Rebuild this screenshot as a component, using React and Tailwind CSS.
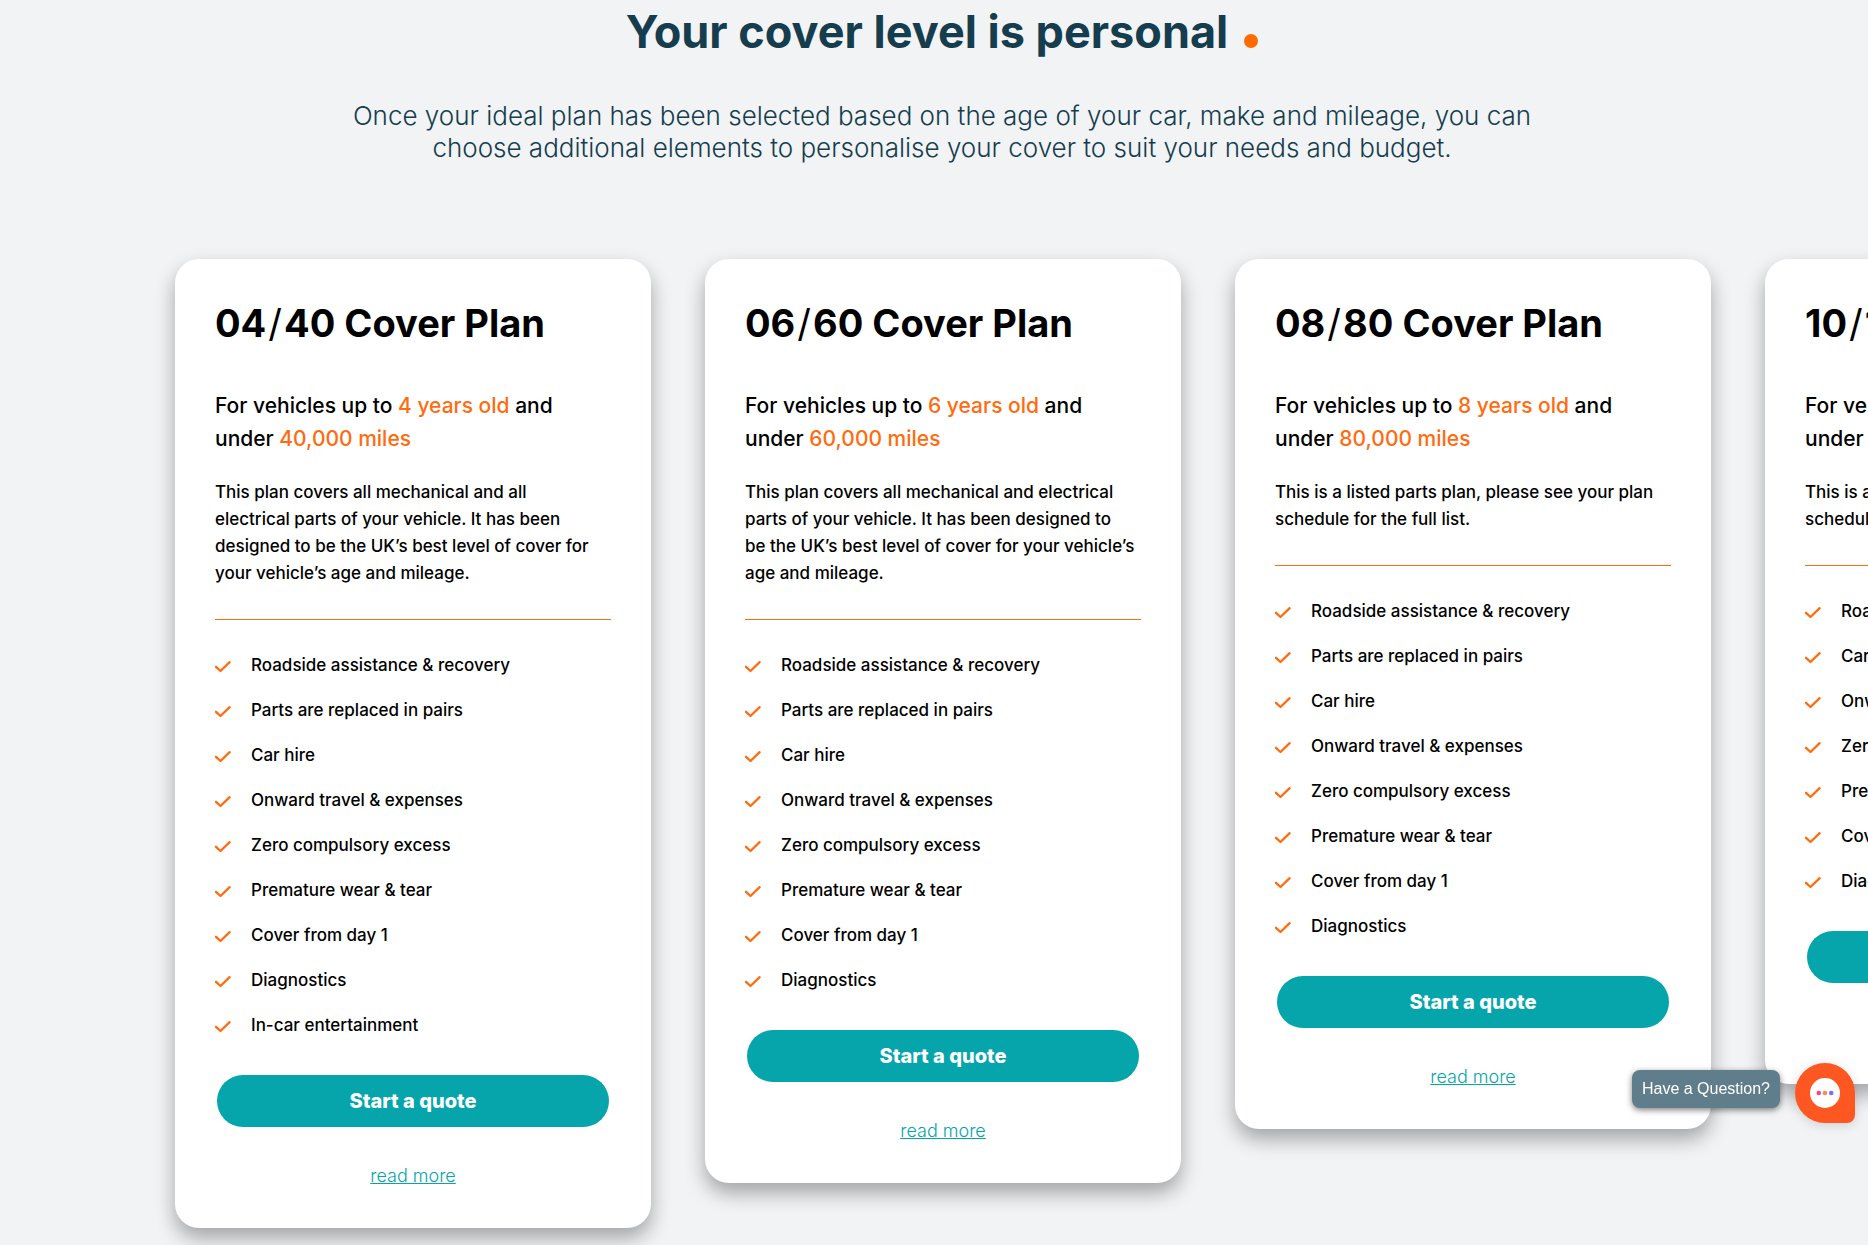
// src/App.jsx
const commonFeatures = [
  'Car hire',
  'Onward travel & expenses',
  'Zero compulsory excess',
  'Premature wear & tear',
  'Cover from day 1',
  'Diagnostics'
];

const listedParts = 'This is a listed parts plan, please see your plan schedule for the full list.';

const plans = [
  {
    age: '04',
    mileage: '40',
    years: '4 years old',
    miles: '40,000 miles',
    description:
      'This plan covers all mechanical and all electrical\u00a0parts of your vehicle. It has been designed to be the UK’s best level of cover for your vehicle’s age and mileage.',
    features: [
      'Roadside assistance & recovery',
      'Parts are replaced in pairs',
      ...commonFeatures,
      'In-car entertainment'
    ]
  },
  {
    age: '06',
    mileage: '60',
    years: '6 years old',
    miles: '60,000 miles',
    description:
      'This plan covers all mechanical and electrical parts of your vehicle. It has been designed to be\u00a0the UK’s best level of cover for your vehicle’s age and mileage.',
    features: ['Roadside assistance & recovery', 'Parts are replaced in pairs', ...commonFeatures]
  },
  {
    age: '08',
    mileage: '80',
    years: '8 years old',
    miles: '80,000 miles',
    description: listedParts,
    features: ['Roadside assistance & recovery', 'Parts are replaced in pairs', ...commonFeatures]
  },
  {
    age: '10',
    mileage: '100',
    years: '10 years old',
    miles: '100,000 miles',
    description: listedParts,
    features: ['Roadside assistance & recovery', ...commonFeatures]
  }
];

function Tick() {
  return (
    <svg className="mt-[2px] h-3 w-4 shrink-0" viewBox="0 0 16 12" fill="none" aria-hidden="true">
      <path
        d="M1 5.8L5.5 10L14.6 1.2"
        stroke="#ff6b0f"
        strokeWidth="2.3"
        strokeLinecap="round"
        strokeLinejoin="round"
      />
    </svg>
  );
}

function PlanCard({ plan }) {
  return (
    <article className="w-[476px] shrink-0 rounded-[24px] bg-white p-10 text-black shadow-[0_10px_20px_rgba(0,0,0,0.33)]">
      <h2 className="text-[38px] leading-12 font-bold whitespace-nowrap">
        {plan.age}
        <span className="mx-[2px] font-normal">/</span>
        {plan.mileage} Cover Plan
      </h2>

      <p className="mt-[42px] text-[21px] leading-[33px] font-medium">
        For vehicles up to <span className="text-[#ff6b0f]">{plan.years}</span> and under{' '}
        <span className="text-[#ff6b0f]">{plan.miles}</span>
      </p>

      <p className="mt-6 text-[17px] leading-[27px] font-medium">{plan.description}</p>

      <hr className="mt-8 border-[#ff6b0f]" />

      <ul className="mt-8 flex flex-col gap-[18px]">
        {plan.features.map((feature) => (
          <li key={feature} className="flex items-center gap-5 text-[17px] leading-[27px] font-medium">
            <Tick />
            {feature}
          </li>
        ))}
      </ul>

      <div className="mt-9 px-[2px]">
        <button
          type="button"
          className="h-[52px] w-full rounded-full bg-[#05a5ab] text-xl font-extrabold text-white"
        >
          Start a quote
        </button>
      </div>

      <div className="mt-[37px] text-center">
        <a href="#read-more" className="text-lg leading-6 font-light text-[#05a5ab] underline">
          read more
        </a>
      </div>
    </article>
  );
}

function ChatWidget() {
  return (
    <div className="fixed right-[13px] bottom-[122px] flex items-center gap-[15px]">
      <div className="mb-2 rounded-lg bg-[#607d8b] px-[10px] py-[7px] font-['Liberation_Sans',sans-serif] text-base text-white shadow-[0_2px_6px_rgba(0,0,0,0.5)]">
        Have a Question?
      </div>
      <button
        type="button"
        aria-label="Open chat"
        className="flex size-[60px] items-center justify-center rounded-[30px] rounded-br-lg bg-[#ff5722] shadow-[0_2px_12px_rgba(0,0,0,0.15)]"
      >
        <svg className="size-[30px]" viewBox="0 0 30 30" aria-hidden="true">
          <circle cx="15" cy="15" r="15" fill="#fff" />
          <circle cx="8.8" cy="15" r="2.3" fill="#ff4081" />
          <circle cx="15" cy="15" r="2.3" fill="#ff8a50" />
          <circle cx="21.2" cy="15" r="2.3" fill="#7c6bff" />
        </svg>
      </button>
    </div>
  );
}

export default function App() {
  return (
    <main className="min-h-screen overflow-hidden bg-[#f1f3f5] font-[Inter,sans-serif]">
      <header className="pt-1 pr-8 pl-12 text-center text-[#163d4d]">
        <h1 className="text-[45px] leading-14 font-bold">
          Your cover level is personal
          <span className="ml-4 inline-block size-[14px] rounded-full bg-[#ff6b00]"></span>
        </h1>
        <p className="mx-auto mt-10 max-w-[1200px] text-[26px] leading-8 font-light">
          Once your ideal plan has been selected based on the age of your car, make and mileage, you can
          choose additional elements to personalise your cover to suit your needs and budget.
        </p>
      </header>

      <section className="mt-[95px] flex items-start gap-[54px] pb-4 pl-[175px]">
        {plans.map((plan) => (
          <PlanCard key={plan.age} plan={plan} />
        ))}
      </section>

      <ChatWidget />
    </main>
  );
}
